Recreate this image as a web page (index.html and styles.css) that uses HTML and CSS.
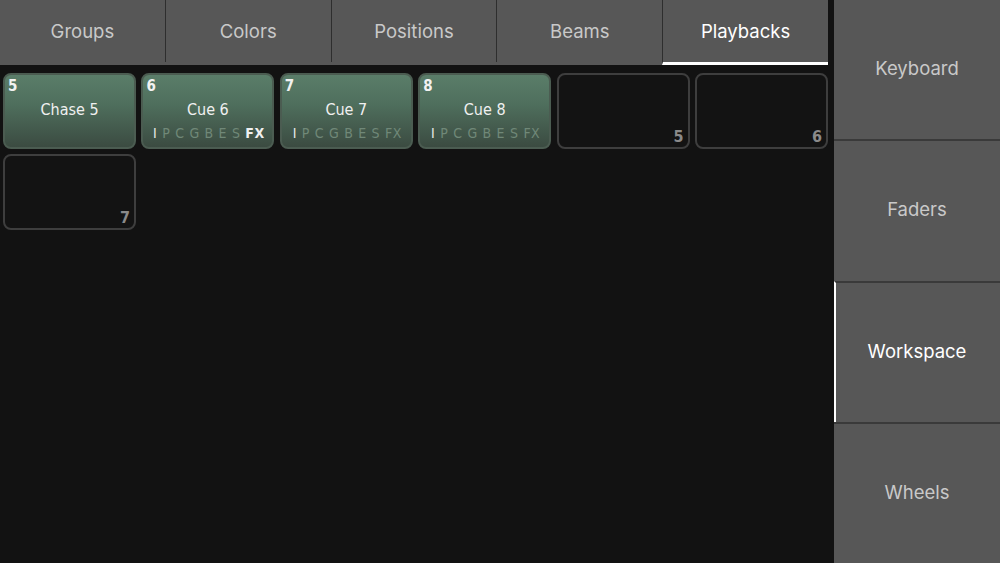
FILE: index.html
```html
<!DOCTYPE html>
<html lang="en">

<head>
    <meta charset="UTF-8">
    <meta name="viewport" content="width=device-width, initial-scale=1.0">
    <title>Playbacks</title>
    <link rel="stylesheet" href="styles.css">
</head>

<body>
    <div class="main">
        <!-- top tabs -->
        <div class="tabs">
            <div class="tab">Groups</div>
            <div class="tab">Colors</div>
            <div class="tab">Positions</div>
            <div class="tab">Beams</div>
            <div class="tab active">Playbacks</div>
        </div>

        <!-- playback grid -->
        <div class="grid">
            <div class="cell used">
                <span class="num">5</span>
                <span class="title">Chase 5</span>
                <span class="attrs"></span>
            </div>
            <div class="cell used">
                <span class="num">6</span>
                <span class="title">Cue 6</span>
                <span class="attrs"><b>I</b>PCGBES<i class="on">FX</i></span>
            </div>
            <div class="cell used">
                <span class="num">7</span>
                <span class="title">Cue 7</span>
                <span class="attrs"><b>I</b>PCGBES<i>FX</i></span>
            </div>
            <div class="cell used">
                <span class="num">8</span>
                <span class="title">Cue 8</span>
                <span class="attrs"><b>I</b>PCGBES<i>FX</i></span>
            </div>
            <div class="cell empty"><span class="slot">5</span></div>
            <div class="cell empty"><span class="slot">6</span></div>
            <div class="cell empty"><span class="slot">7</span></div>
        </div>
    </div>

    <!-- right side menu -->
    <div class="side">
        <div class="side-item">Keyboard</div>
        <div class="side-item">Faders</div>
        <div class="side-item active">Workspace</div>
        <div class="side-item">Wheels</div>
    </div>
</body>

</html>
```

FILE: styles.css
```css
/* page */
body {
    margin: 0;
    width: 1000px;
    height: 563px;
    display: flex;
    background: #121212;
    font-family: 'Inter', 'Noto Sans', sans-serif;
    overflow: hidden;
}

.main {
    width: 834px;
    display: flex;
    flex-direction: column;
}

/* tabs */
.tabs {
    display: flex;
    width: 828px;
    height: 65px;
    background: #575757;
}

.tab {
    flex: 1;
    display: flex;
    align-items: center;
    justify-content: center;
    color: #c9c9c9;
    font-size: 18.5px;
    border-left: 1px solid #2e2e2e;
    height: 62px;
    box-sizing: border-box;
    margin-bottom: 3px;
}

.tab:first-child {
    border-left: none;
}

.tab.active {
    color: #fff;
    border-bottom: 3px solid #fff;
    height: 65px;
    margin-bottom: 0;
}

/* grid */
.grid {
    display: grid;
    grid-template-columns: repeat(6, 133px);
    grid-auto-rows: 76px;
    gap: 5px 5.4px;
    padding: 8px 0 0 3px;
}

.cell {
    position: relative;
    border-radius: 8px;
    box-sizing: border-box;
    font-family: 'DejaVu Sans', sans-serif;
    font-stretch: condensed;
}

.cell.used {
    background: linear-gradient(to bottom, #5a7d69 0%, #4f6f5d 40%, #3b4b41 100%);
    border: 2px solid #4b5c51;
    display: flex;
    flex-direction: column;
    align-items: center;
}

.cell.empty {
    background: #131313;
    border: 2px solid #3e3e3e;
}

.num {
    position: absolute;
    top: 2px;
    left: 3px;
    color: #f2f2f2;
    font-weight: bold;
    font-size: 15px;
}

.title {
    margin-top: 25px;
    color: #f0f0f0;
    font-size: 16px;
}

.attrs {
    margin-top: 6px;
    color: #708878;
    font-size: 14px;
    letter-spacing: 5.4px;
    padding-left: 2px;
}

.attrs b {
    color: #e8e8e8;
    font-weight: normal;
}

.attrs i {
    font-style: normal;
    letter-spacing: 0.5px;
}

.attrs i.on {
    color: #f0f0f0;
    font-weight: bold;
}

.slot {
    position: absolute;
    right: 4px;
    bottom: 1px;
    color: #8a8a8a;
    font-weight: bold;
    font-size: 16px;
}

/* side menu */
.side {
    width: 166px;
    display: flex;
    flex-direction: column;
    background: #575757;
}

.side-item {
    flex: 1 1 0;
    display: flex;
    align-items: center;
    justify-content: center;
    color: #c9c9c9;
    font-size: 18.5px;
    border-top: 2px solid #3a3a3a;
    box-sizing: border-box;
    padding-bottom: 3px;
}

.side-item:first-child {
    border-top: none;
}

.side-item.active {
    color: #fff;
    border-left: 2px solid #fff;
    padding-right: 2px;
}
```
